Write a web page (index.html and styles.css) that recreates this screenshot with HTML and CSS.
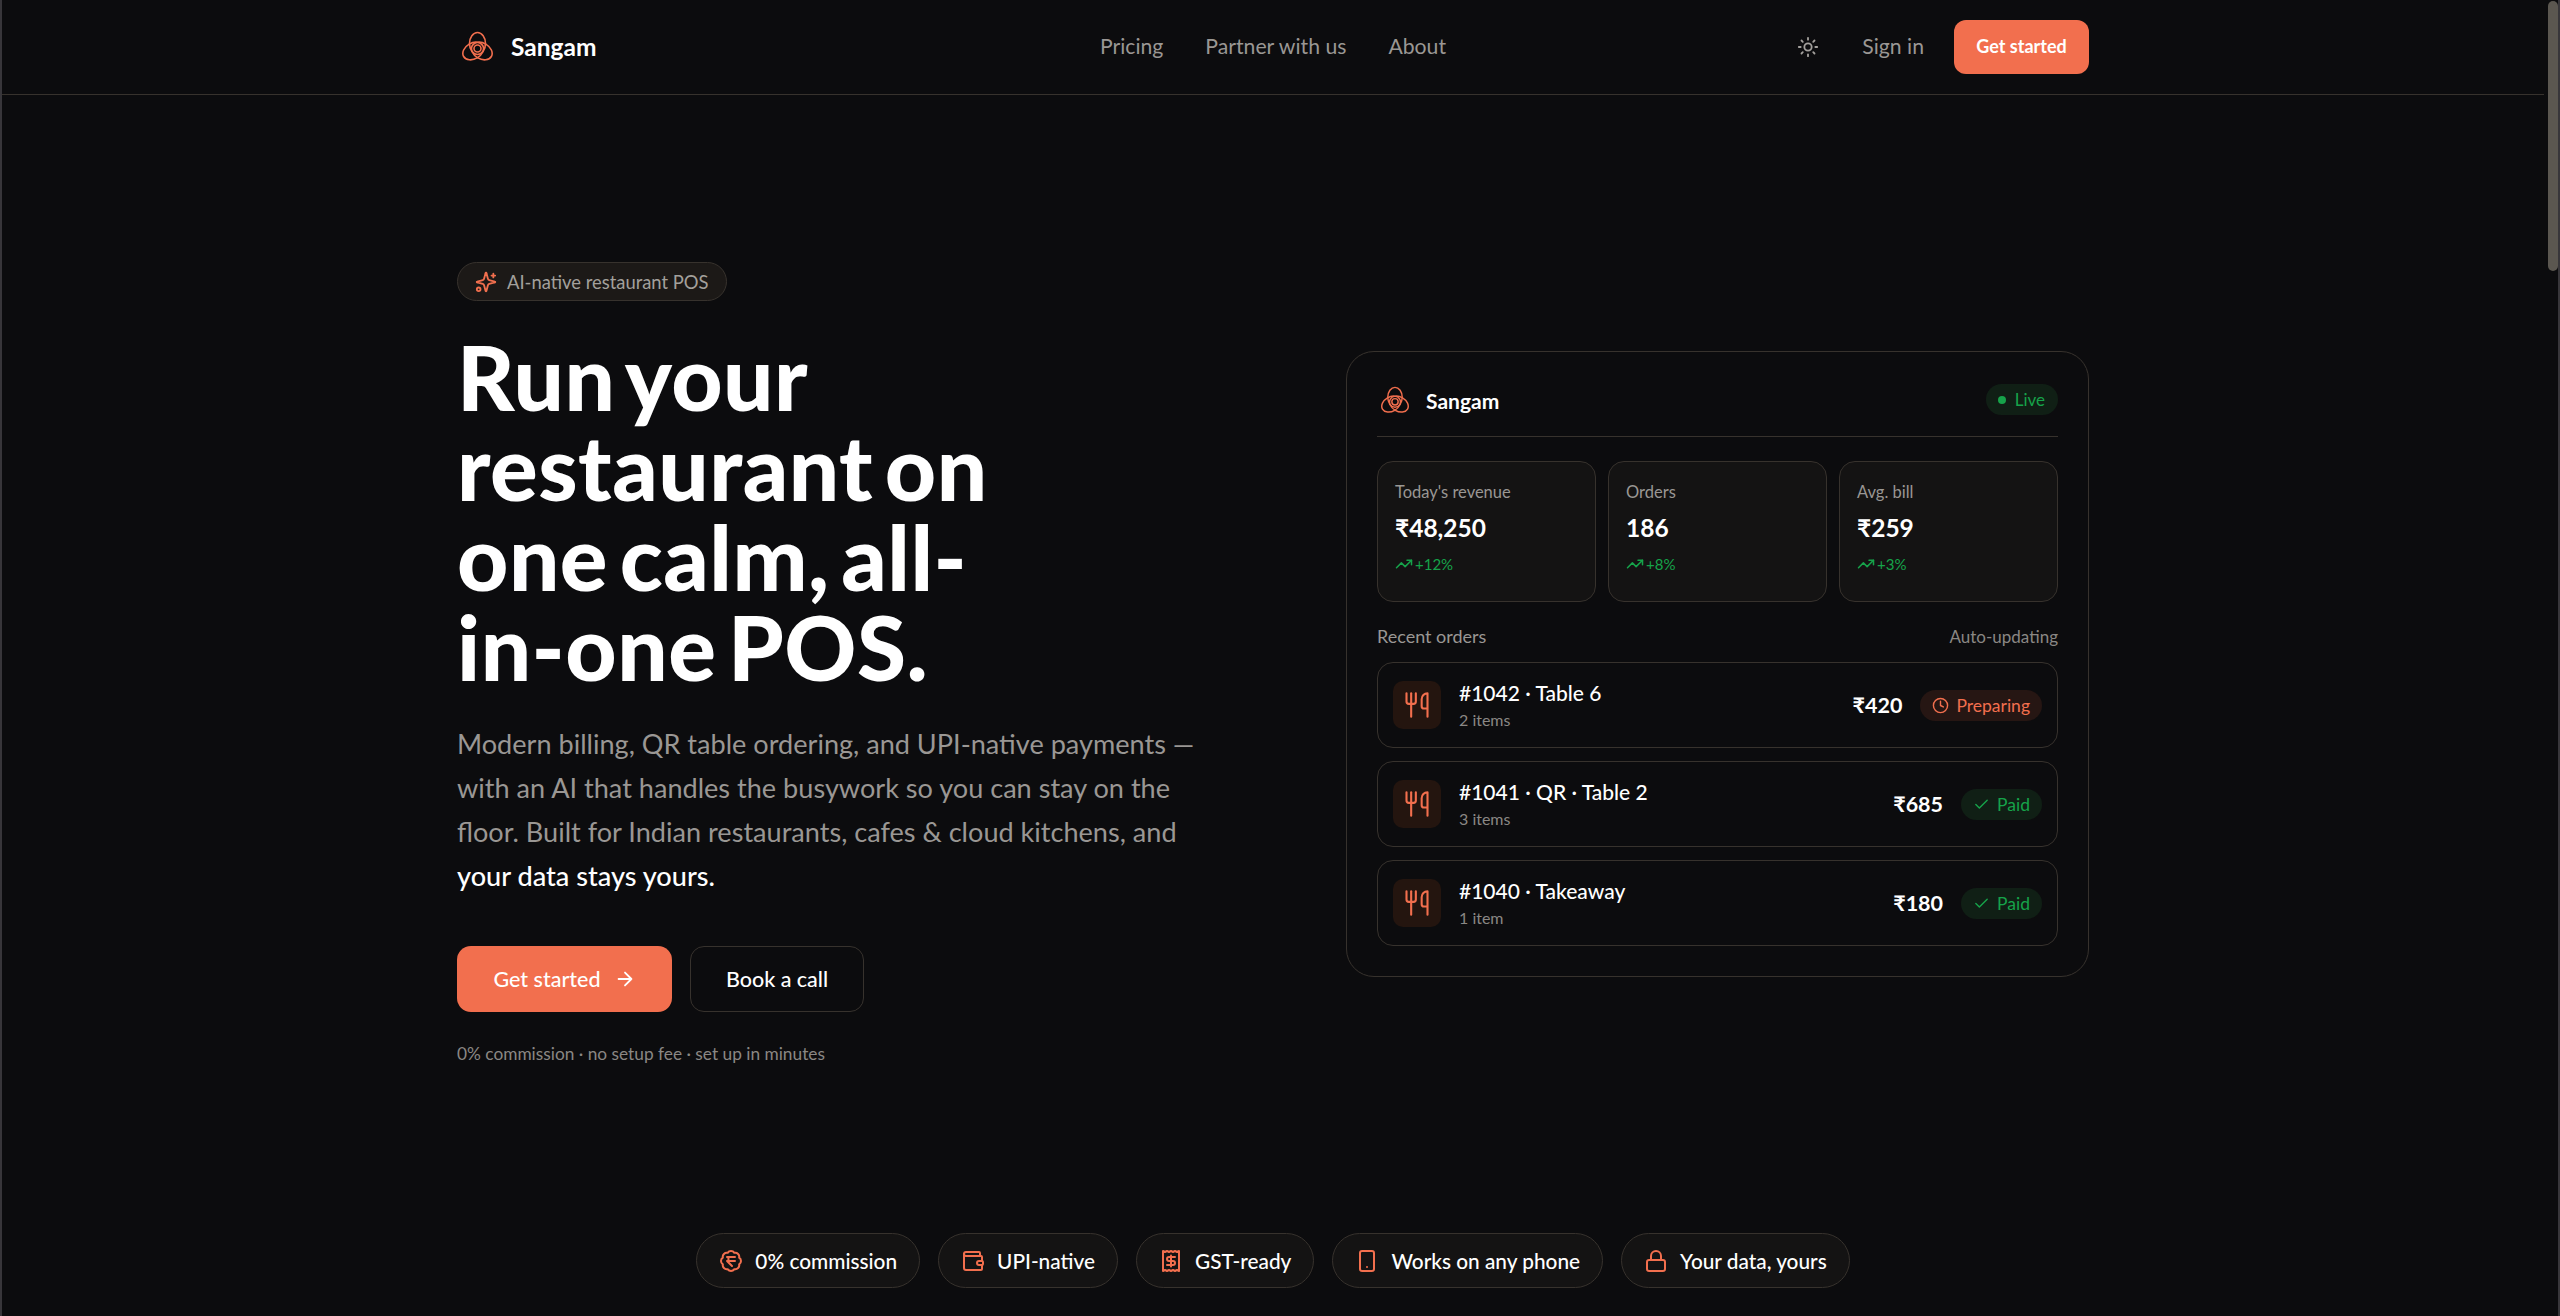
FILE: index.html
```html
<!DOCTYPE html>
<html lang="en">
<head>
<meta charset="utf-8">
<title>Sangam</title>
<link rel="stylesheet" href="styles.css">
</head>
<body>
<svg class="defs" width="0" height="0" aria-hidden="true">
  <symbol id="logo" viewBox="-0.500 -0.500 31 31" fill="none" stroke="currentColor" stroke-width="1.600" stroke-linecap="round" stroke-linejoin="round">
    <ellipse cx="15" cy="12" rx="8" ry="11"/>
    <ellipse cx="15" cy="12" rx="8" ry="11" transform="rotate(120 15 17)"/>
    <ellipse cx="15" cy="12" rx="8" ry="11" transform="rotate(240 15 17)"/>
    <circle cx="15" cy="17" r="3.500"/>
  </symbol>
  <symbol id="fork" viewBox="0 0 24 24" fill="none" stroke="currentColor" stroke-width="1.800" stroke-linecap="round" stroke-linejoin="round">
    <path d="M3 2v7c0 1.100.9 2 2 2h4a2 2 0 0 0 2-2V2"/><path d="M7 2v20"/><path d="M21 15V2a5 5 0 0 0-5 5v6c0 1.100.9 2 2 2h3Zm0 0v7"/>
  </symbol>
  <symbol id="trend" viewBox="0 0 24 24" fill="none" stroke="currentColor" stroke-width="2" stroke-linecap="round" stroke-linejoin="round">
    <path d="M22 7l-8.500 8.500-5-5L2 17"/><path d="M16 7h6v6"/>
  </symbol>
  <symbol id="check" viewBox="0 0 24 24" fill="none" stroke="currentColor" stroke-width="2" stroke-linecap="round" stroke-linejoin="round">
    <path d="M20 6 9 17l-5-5"/>
  </symbol>
</svg>

<div class="page">
  <header class="nav">
    <div class="wrap nav-row">
      <a class="brand">
        <svg class="logo"><use href="#logo"/></svg>
        <span>Sangam</span>
      </a>
      <nav class="links">
        <a>Pricing</a><a>Partner with us</a><a>About</a>
      </nav>
      <div class="actions">
        <svg class="sun" viewBox="0 0 24 24" fill="none" stroke="currentColor" stroke-width="2" stroke-linecap="round"><circle cx="12" cy="12" r="4"/><path d="M12 2v2M12 20v2M4.900 4.900l1.400 1.400M17.700 17.700l1.400 1.400M2 12h2M20 12h2M6.300 17.700l-1.400 1.400M19.100 4.900l-1.400 1.400"/></svg>
        <a class="signin">Sign in</a>
        <a class="btn-small">Get started</a>
      </div>
    </div>
  </header>

  <main class="wrap hero">
    <section class="intro">
      <div class="tag">
        <svg class="tag-icon" viewBox="0 0 24 24" fill="none" stroke="currentColor" stroke-width="2" stroke-linecap="round" stroke-linejoin="round"><path d="M9.900 15.500a2 2 0 0 0-1.400-1.400l-6.100-1.600a.5.500 0 0 1 0-1l6.100-1.600a2 2 0 0 0 1.400-1.400l1.600-6.100a.5.500 0 0 1 1 0l1.600 6.100a2 2 0 0 0 1.400 1.400l6.100 1.600a.5.500 0 0 1 0 1l-6.100 1.600a2 2 0 0 0-1.400 1.400l-1.600 6.100a.5.500 0 0 1-1 0Z"/><path d="M20 3v4M22 5h-4"/><circle cx="4" cy="20" r="2"/></svg>
        <span>AI-native restaurant POS</span>
      </div>
      <h1>Run your restaurant on one calm, all-in-one POS.</h1>
      <p class="lead">Modern billing, QR table ordering, and UPI-native payments — with an AI that handles the busywork so you can stay on the floor. Built for Indian restaurants, cafes &amp; cloud kitchens, and <strong>your data stays yours.</strong></p>
      <div class="cta">
        <a class="btn-primary">Get started
          <svg class="arrow" viewBox="0 0 24 24" fill="none" stroke="currentColor" stroke-width="2" stroke-linecap="round" stroke-linejoin="round"><path d="M5 12h14M12 5l7 7-7 7"/></svg>
        </a>
        <a class="btn-ghost">Book a call</a>
      </div>
      <p class="fine">0% commission · no setup fee · set up in minutes</p>
    </section>

    <section class="card">
      <div class="card-head">
        <div class="card-brand"><svg class="card-logo"><use href="#logo"/></svg><span>Sangam</span></div>
        <div class="live"><i class="dot"></i>Live</div>
      </div>
      <div class="stats">
        <div class="stat"><div class="stat-label">Today's revenue</div><div class="stat-value">₹48,250</div><div class="stat-delta"><svg class="trend"><use href="#trend"/></svg>+12%</div></div>
        <div class="stat"><div class="stat-label">Orders</div><div class="stat-value">186</div><div class="stat-delta"><svg class="trend"><use href="#trend"/></svg>+8%</div></div>
        <div class="stat"><div class="stat-label">Avg. bill</div><div class="stat-value">₹259</div><div class="stat-delta"><svg class="trend"><use href="#trend"/></svg>+3%</div></div>
      </div>
      <div class="orders-head"><span class="orders-title">Recent orders</span><span class="orders-note">Auto-updating</span></div>
      <div class="orders">
        <div class="order">
          <div class="order-icon"><svg><use href="#fork"/></svg></div>
          <div class="order-text"><div class="order-name">#1042 · Table 6</div><div class="order-sub">2 items</div></div>
          <div class="order-amount">₹420</div>
          <div class="badge badge-warm"><svg viewBox="0 0 24 24" fill="none" stroke="currentColor" stroke-width="2" stroke-linecap="round" stroke-linejoin="round"><circle cx="12" cy="12" r="10"/><path d="M12 6v6l4 2"/></svg>Preparing</div>
        </div>
        <div class="order">
          <div class="order-icon"><svg><use href="#fork"/></svg></div>
          <div class="order-text"><div class="order-name">#1041 · QR · Table 2</div><div class="order-sub">3 items</div></div>
          <div class="order-amount">₹685</div>
          <div class="badge badge-green"><svg><use href="#check"/></svg>Paid</div>
        </div>
        <div class="order">
          <div class="order-icon"><svg><use href="#fork"/></svg></div>
          <div class="order-text"><div class="order-name">#1040 · Takeaway</div><div class="order-sub">1 item</div></div>
          <div class="order-amount">₹180</div>
          <div class="badge badge-green"><svg><use href="#check"/></svg>Paid</div>
        </div>
      </div>
    </section>
  </main>

  <section class="chips">
    <div class="chip"><svg viewBox="0 0 24 24" fill="none" stroke="currentColor" stroke-width="2" stroke-linecap="round" stroke-linejoin="round"><path d="M3.850 8.620a4 4 0 0 1 4.780-4.770 4 4 0 0 1 6.740 0 4 4 0 0 1 4.780 4.780 4 4 0 0 1 0 6.740 4 4 0 0 1-4.770 4.780 4 4 0 0 1-6.750 0 4 4 0 0 1-4.780-4.770 4 4 0 0 1 0-6.760Z"/><path d="M8 8h8M8 12h8M13 17l-5-5h1a4 4 0 0 0 0-4"/></svg>0% commission</div>
    <div class="chip"><svg viewBox="0 0 24 24" fill="none" stroke="currentColor" stroke-width="2" stroke-linecap="round" stroke-linejoin="round"><path d="M19 7V4a1 1 0 0 0-1-1H5a2 2 0 0 0 0 4h15a1 1 0 0 1 1 1v4h-3a2 2 0 0 0 0 4h3a1 1 0 0 0 1-1v-2a1 1 0 0 0-1-1"/><path d="M3 5v14a2 2 0 0 0 2 2h15a1 1 0 0 0 1-1v-4"/></svg>UPI-native</div>
    <div class="chip"><svg viewBox="0 0 24 24" fill="none" stroke="currentColor" stroke-width="2" stroke-linecap="round" stroke-linejoin="round"><path d="M4 2v20l2-1 2 1 2-1 2 1 2-1 2 1 2-1 2 1V2l-2 1-2-1-2 1-2-1-2 1-2-1-2 1Z"/><path d="M16 8h-6a2 2 0 1 0 0 4h4a2 2 0 1 1 0 4H8"/><path d="M12 17.500v-11"/></svg>GST-ready</div>
    <div class="chip"><svg viewBox="0 0 24 24" fill="none" stroke="currentColor" stroke-width="2" stroke-linecap="round" stroke-linejoin="round"><rect x="5" y="2" width="14" height="20" rx="2"/><path d="M12 18h.01"/></svg>Works on any phone</div>
    <div class="chip"><svg viewBox="0 0 24 24" fill="none" stroke="currentColor" stroke-width="2" stroke-linecap="round" stroke-linejoin="round"><rect x="3" y="11" width="18" height="11" rx="2"/><path d="M7 11V7a5 5 0 0 1 10 0v4"/></svg>Your data, yours</div>
  </section>
</div>
<div class="scrollbar"></div>
</body>
</html>
```
FILE: styles.css
```css
* { box-sizing: border-box; }
html, body { margin: 0; height: 100%; overflow: hidden; background: #0c0c0e; }
body { font-family: "Lato", "Noto Sans", sans-serif; color: #fff; border-left: 2px solid #38363a; border-right: 2px solid #38363a; position: relative; }
a { color: inherit; text-decoration: none; }
.defs { position: absolute; }
.page { width: 2542px; }
.wrap { width: 1632px; margin: 0 auto; }

.nav { height: 95px; border-bottom: 1px solid #37322d; }
.nav-row { height: 94px; display: grid; grid-template-columns: 1fr auto 1fr; align-items: center; }
.brand { display: flex; align-items: center; gap: 18px; padding: 0 0 2px 5px; font-size: 24.500px; font-weight: 700; }
.logo { width: 31px; height: 31px; color: #f26f4e; }
.links { display: flex; gap: 42px; font-size: 21.200px; color: #9a9794; padding-bottom: 2px; }
.actions { display: flex; align-items: center; justify-content: flex-end; }
.sun { width: 22px; height: 22px; color: #a3a09c; margin-right: 43px; }
.signin { font-size: 21.200px; color: #9a9794; margin-right: 30px; padding-bottom: 2px; }
.btn-small { height: 54px; width: 135px; display: flex; align-items: center; justify-content: center; background: #f26f4e; border-radius: 12px; font-size: 18px; font-weight: 700; padding-bottom: 2px; }

.hero { height: 1138px; display: grid; grid-template-columns: 1fr 743px; align-items: center; }
.intro { display: flex; flex-direction: column; align-items: flex-start; }
.tag { height: 39px; width: 270px; display: flex; align-items: center; gap: 10px; padding: 0 16px 0 17px; border: 1px solid #37322d; border-radius: 20px; background: #1c1917; color: #a3a09c; font-size: 18.400px; }
.tag-icon { width: 22px; height: 22px; color: #f26f4e; }
h1 { margin: 31px 0 0; width: 600px; font-size: 89px; line-height: 90px; font-weight: 900; letter-spacing: 0.500px; word-spacing: -10px; }
.lead { margin: 30px 0 0; width: 750px; font-size: 27.100px; line-height: 44px; color: #9a9794; }
.lead strong { color: #fff; font-weight: 500; }
.cta { display: flex; gap: 18px; margin-top: 48px; }
.btn-primary { width: 215px; height: 66px; display: flex; align-items: center; justify-content: center; gap: 13px; background: #f26f4e; border-radius: 14px; font-size: 21.500px; font-weight: 500; }
.arrow { width: 22px; height: 22px; }
.btn-ghost { width: 174px; height: 66px; display: flex; align-items: center; justify-content: center; border: 1px solid #37322d; border-radius: 14px; font-size: 21.500px; font-weight: 500; }
.fine { margin: 30px 0 0; font-size: 17.300px; color: #8a8784; line-height: 24px; }

.card { height: 626px; padding: 30px; border: 1px solid #37322d; border-radius: 28px; }
.card-head { height: 55px; display: flex; justify-content: space-between; align-items: flex-start; border-bottom: 1px solid #37322d; }
.card-brand { display: flex; align-items: center; gap: 17px; padding: 4px 0 0 4px; font-size: 21px; font-weight: 700; }
.card-logo { width: 28px; height: 28px; color: #f26f4e; }
.live { height: 31px; padding: 0 13px 0 12px; display: flex; align-items: center; gap: 9px; border-radius: 16px; background: #101f15; color: #16a34a; font-size: 17px; margin-top: 2px; }
.dot { width: 8px; height: 8px; border-radius: 50%; background: #16a34a; }
.stats { display: grid; grid-template-columns: repeat(3, 1fr); gap: 12px; margin-top: 24px; }
.stat { height: 141px; padding: 19px 17px; border: 1px solid #37322d; border-radius: 16px; background: #141313; }
.stat-label { font-size: 16.500px; line-height: 22px; color: #9a9794; }
.stat-value { margin-top: 8px; font-size: 24.500px; line-height: 34px; font-weight: 700; }
.stat-delta { margin-top: 9px; display: flex; align-items: center; gap: 2px; font-size: 15px; line-height: 20px; color: #16a34a; }
.trend { width: 18px; height: 18px; }
.orders-head { display: flex; justify-content: space-between; align-items: center; margin-top: 22px; height: 24px; }
.orders-title { font-size: 18px; color: #9a9794; }
.orders-note { font-size: 17px; color: #8a8784; }
.orders { display: flex; flex-direction: column; gap: 13px; margin-top: 14px; }
.order { height: 86px; display: flex; align-items: center; padding: 0 15px; border: 1px solid #37322d; border-radius: 16px; }
.order-icon { width: 48px; height: 48px; display: flex; align-items: center; justify-content: center; border-radius: 10px; background: #24150f; color: #f26f4e; }
.order-icon svg { width: 28px; height: 28px; }
.order-text { flex: 1; margin-left: 18px; }
.order-name { font-size: 21px; line-height: 28px; font-weight: 500; }
.order-sub { font-size: 16px; line-height: 22px; margin-top: 2px; color: #8a8784; }
.order-amount { font-size: 21.500px; font-weight: 700; margin-right: 18px; }
.badge { height: 31px; padding: 0 12px; display: flex; align-items: center; gap: 7px; border-radius: 16px; font-size: 17.500px; }
.badge svg { width: 17px; height: 17px; }
.badge-warm { background: #261613; color: #f26f4e; }
.badge-green { background: #101f15; color: #16a34a; }

.chips { display: flex; justify-content: center; gap: 18px; }
.chip { height: 55px; display: flex; align-items: center; gap: 12px; padding: 0 22px; border: 1px solid #37322d; border-radius: 28px; background: #141313; font-size: 20.800px; font-weight: 500; white-space: nowrap; }
.chip svg { width: 24px; height: 24px; color: #f26f4e; flex: none; }

.scrollbar { position: absolute; right: 0; top: 1px; width: 10px; height: 270px; border-radius: 5px; background: #5b5750; }
```
